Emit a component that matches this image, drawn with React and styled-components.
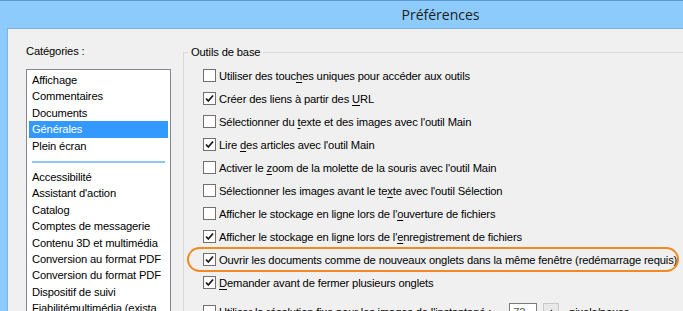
import React from "react";
import styled, { createGlobalStyle } from "styled-components";

const GlobalStyle = createGlobalStyle`
  html, body {
    margin: 0;
    padding: 0;
    background: #8ccbfb;
    overflow: hidden;
  }
  body {
    font-family: "Liberation Sans", Arial, sans-serif;
    font-size: 11.2px;
    letter-spacing: -0.15px;
    color: #000;
  }
`;

const topCategories = ["Affichage", "Commentaires", "Documents", "Générales", "Plein écran"];
const otherCategories = [
  "Accessibilité",
  "Assistant d'action",
  "Catalog",
  "Comptes de messagerie",
  "Contenu 3D et multimédia",
  "Conversion au format PDF",
  "Conversion du format PDF",
  "Dispositif de suivi",
  "Fiabilitémultimédia (exista",
];

const options = [
  { checked: false, text: <>Utiliser des touc<u>h</u>es uniques pour accéder aux outils</> },
  { checked: true, text: <>Créer des liens à partir des <u>U</u>RL</> },
  { checked: false, text: <>Sélectionner du <u>t</u>exte et des images avec l'outil Main</> },
  { checked: true, text: <>Lire <u>d</u>es articles avec l'outil Main</> },
  { checked: false, text: <>Activer le <u>z</u>oom de la molette de la souris avec l'outil Main</> },
  { checked: false, text: <>Sélectionner les images avant le te<u>x</u>te avec l'outil Sélection</> },
  { checked: false, text: <>Afficher le stockage en ligne lors de l'<u>o</u>uverture de fichiers</> },
  { checked: true, text: <>Afficher le stockage en ligne lors de l'<u>e</u>nregistrement de fichiers</> },
  {
    checked: true,
    highlight: true,
    text: <>Ouvrir les documents comme de nouveaux onglets dans la même fenêtre (redémarrage requis)</>,
  },
  { checked: true, text: <><u>D</u>emander avant de fermer plusieurs onglets</> },
];

const Check = ({ checked }) => (
  <CheckBox>
    {checked && (
      <svg width="11" height="11" viewBox="0 0 11 11">
        <path d="M2 5.5 L4.3 8 L9 2.5" fill="none" stroke="#1a1a1a" strokeWidth="1.8" />
      </svg>
    )}
  </CheckBox>
);

const App = () => {
  return (
    <>
      <GlobalStyle />
      <Window>
        <TitleBar>Préférences</TitleBar>
        <Client>
          <Sidebar>
            <SideLabel>Catégories :</SideLabel>
            <ListBox>
              {topCategories.map((c) => (
                <ListItem key={c} $selected={c === "Générales"}>
                  {c}
                </ListItem>
              ))}
              <ListSeparator />
              {otherCategories.map((c) => (
                <ListItem key={c}>{c}</ListItem>
              ))}
            </ListBox>
          </Sidebar>
          <Group>
            <Legend>Outils de base</Legend>
            {options.map((o, i) => (
              <OptionRow key={i} $highlight={o.highlight}>
                <Check checked={o.checked} />
                <span>{o.text}</span>
              </OptionRow>
            ))}
            <OptionRow $gap>
              <Check checked={false} />
              <span>Utiliser la résolution fixe pour les images de l'instantané :</span>
              <NumberBox>72</NumberBox>
              <Spinner>
                <svg width="7" height="5" viewBox="0 0 7 5">
                  <path d="M0 5 L3.5 0.5 L7 5 Z" fill="#333" />
                </svg>
              </Spinner>
              <span>pixels/pouce</span>
            </OptionRow>
          </Group>
        </Client>
      </Window>
    </>
  );
};

const Window = styled.div`
  width: 683px;
  height: 311px;
  overflow: hidden;
  background: #8ccbfb;
  border-top: 1px solid #5f98d0;
  box-sizing: border-box;
  display: flex;
  flex-direction: column;
`;

const TitleBar = styled.div`
  height: 27px;
  flex: 0 0 27px;
  display: flex;
  align-items: center;
  justify-content: center;
  padding-left: 198px;
  padding-bottom: 1px;
  box-sizing: border-box;
  font-family: "Open Sans", "Liberation Sans", sans-serif;
  font-size: 14px;
  letter-spacing: 0;
  color: #1c1c1c;
`;

const Client = styled.div`
  flex: 1;
  margin-left: 7px;
  background: #f0f0f0;
  border-top: 1px solid #7fb4e4;
  border-left: 1px solid #7fb4e4;
  display: flex;
  min-height: 0;
`;

const Sidebar = styled.div`
  width: 165px;
  flex: 0 0 165px;
  box-sizing: border-box;
  padding: 14px 0 0 18px;
  display: flex;
  flex-direction: column;
`;

const SideLabel = styled.div`
  height: 16px;
  line-height: 16px;
  margin-bottom: 10px;
`;

const ListBox = styled.div`
  width: 145px;
  box-sizing: border-box;
  border: 1px solid #828790;
  background: #fff;
  padding: 2px 2px 0;
  flex: 1;
`;

const ListItem = styled.div`
  height: 16.4px;
  line-height: 16px;
  padding-left: 3px;
  white-space: nowrap;
  overflow: hidden;
  background: ${(p) => (p.$selected ? "#3399ff" : "transparent")};
  color: ${(p) => (p.$selected ? "#fff" : "#000")};
`;

const ListSeparator = styled.div`
  height: 2px;
  background: #8fc6f3;
  margin: 7px 3px 6px 3px;
`;

const Group = styled.div`
  position: relative;
  flex: 1;
  margin: 23px -20px 0 10px;
  border: 1px solid #d9d9d9;
  border-bottom: none;
  padding: 11px 0 0 19px;
`;

const Legend = styled.div`
  position: absolute;
  top: -9px;
  left: 4px;
  padding: 0 3px;
  background: #f0f0f0;
  line-height: 16px;
`;

const OptionRow = styled.div`
  position: relative;
  height: 23px;
  display: flex;
  align-items: center;
  gap: 2px;
  white-space: nowrap;
  margin-top: ${(p) => (p.$gap ? "6px" : "0")};

  u {
    text-decoration: underline;
    text-underline-offset: 2px;
  }

  &::before {
    content: "";
    display: ${(p) => (p.$highlight ? "block" : "none")};
    position: absolute;
    left: -16px;
    top: -1px;
    width: 492px;
    height: 25px;
    box-sizing: border-box;
    border: 2px solid #f08a24;
    border-radius: 14px;
    pointer-events: none;
  }
`;

const CheckBox = styled.span`
  width: 13px;
  height: 13px;
  flex: 0 0 13px;
  box-sizing: border-box;
  border: 1px solid #707070;
  background: #fff;
  display: inline-flex;
  align-items: center;
  justify-content: center;
  margin-right: 1px;
`;

const NumberBox = styled.span`
  width: 28px;
  height: 18px;
  box-sizing: border-box;
  border: 1px solid #7a7a7a;
  background: #fff;
  margin-left: 16px;
  padding-left: 3px;
  line-height: 16px;
  color: #555;
`;

const Spinner = styled.span`
  width: 14px;
  height: 16px;
  margin-left: 4px;
  margin-right: 8px;
  border: 1px solid #c9c9c9;
  background: #e8e8e8;
  display: inline-flex;
  align-items: center;
  justify-content: center;
`;

export default App;
